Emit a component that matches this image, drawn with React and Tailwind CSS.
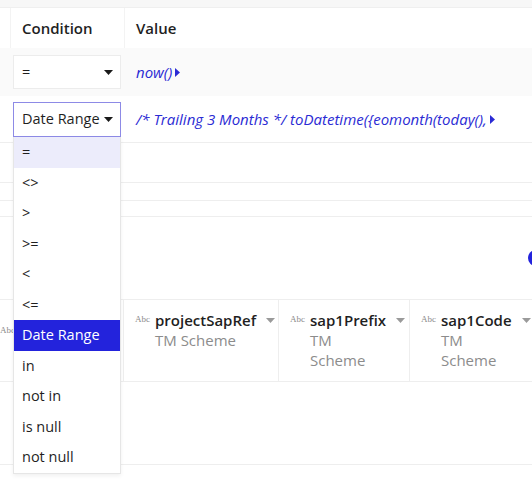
import React from "react";

const options = ["=", "<>", ">", ">=", "<", "<=", "Date Range", "in", "not in", "is null", "not null"];

const columns = [
  { name: "projectSapRef", width: "w-[155px]" },
  { name: "sap1Prefix", width: "w-[131px]" },
  { name: "sap1Code", width: "w-[140px]" },
];

function Caret({ className = "fill-[#1a1a1a]" }) {
  return (
    <svg width="9" height="5" viewBox="0 0 9 5" className={className}>
      <path d="M0 0 H9 L4.5 5 Z" />
    </svg>
  );
}

function PlayMark() {
  return (
    <svg width="5" height="9" viewBox="0 0 5 9" className="ml-[3px] fill-[#2b2bd4]">
      <path d="M0 0 L5 4.5 L0 9 Z" />
    </svg>
  );
}

function Select({ label, active }) {
  return (
    <div
      className={
        "flex items-center justify-between w-[108px] bg-white pl-[8px] pr-[7px] text-[14.5px] text-[#1f1f1f] " +
        (active ? "h-[35px] border border-[#8d8ae6]" : "h-[34px] border border-[#ececec]")
      }
    >
      <span className="whitespace-nowrap">{label}</span>
      <Caret />
    </div>
  );
}

function ColumnHeader({ name, width }) {
  return (
    <div className={"flex shrink-0 items-start border-r border-[#eeeeee] pl-[11px] pt-[10px] " + width}>
      <span className="mt-[5px] w-[20px] font-['Liberation_Serif'] text-[9px] leading-none text-[#8a8a8a]">Abc</span>
      <div className="inline-grid">
        <span className="whitespace-nowrap text-[15px] font-semibold leading-[20px] text-[#1f1f1f]">{name}</span>
        <span className="w-0 min-w-full text-[15px] leading-[20px] text-[#8c8c8c]">TM Scheme</span>
      </div>
      <Caret className="ml-[10px] mt-[8px] shrink-0 fill-[#9a9a9a]" />
    </div>
  );
}

export default function App() {
  return (
    <div className="relative h-[480px] w-[532px] overflow-hidden bg-white font-['Open_Sans',sans-serif]">
      <div className="h-[8px] border-b border-[#efefef] bg-[#f7f7f7]" />

      {/* header */}
      <div className="flex h-[40px] items-center">
        <div className="w-[10px]" />
        <div className="flex h-full w-[115px] items-center border-x border-[#f3f3f3] pl-[11px] text-[15px] font-semibold text-[#1f1f1f]">
          Condition
        </div>
        <div className="pl-[11px] text-[15px] font-semibold text-[#1f1f1f]">Value</div>
      </div>

      {/* row 1 */}
      <div className="flex h-[48px] items-center bg-[#fafafa] pl-[13px]">
        <Select label="=" />
        <div className="ml-[15px] flex items-center text-[15px] italic text-[#2b2bd4]">
          now()
          <PlayMark />
        </div>
      </div>

      {/* row 2 */}
      <div className="flex h-[47px] items-center border-b border-[#eeeeee] pl-[13px]">
        <Select label="Date Range" active />
        <div className="ml-[15px] flex items-center whitespace-nowrap text-[15px] italic text-[#2b2bd4]">
          /* Trailing 3 Months */ toDatetime({"{"}eomonth(today(),
          <PlayMark />
        </div>
      </div>

      <div className="h-[40px] border-b border-[#eeeeee]" />
      <div className="h-[18px] border-b border-[#eeeeee]" />
      <div className="h-[16px] border-b border-[#eeeeee]" />

      <div className="flex h-[82px] items-center justify-end">
        <div className="mr-[-12px] h-[16px] w-[16px] rounded-full bg-[#2323dc]" />
      </div>

      {/* lower column headers */}
      <div className="flex h-[83px] border-y border-[#eeeeee]">
        <div className="w-[124px] shrink-0 border-r border-[#eeeeee] pt-[15px]">
          <span className="font-['Liberation_Serif'] text-[9px] leading-none text-[#8a8a8a]">Abc</span>
        </div>
        {columns.map((c) => (
          <ColumnHeader key={c.name} name={c.name} width={c.width} />
        ))}
      </div>
      <div className="h-[83px] border-b border-[#eeeeee]" />

      {/* open dropdown */}
      <div className="absolute left-[13px] top-[137px] w-[108px] border border-t-0 border-[#e6e6e6] bg-white shadow-[0_2px_4px_rgba(0,0,0,0.06)]">
        {options.map((o, i) => (
          <div
            key={o}
            className={
              "flex h-[30.5px] items-center pl-[8px] text-[14.5px] " +
              (o === "Date Range"
                ? "bg-[#2323dc] text-white"
                : i === 0
                ? "bg-[#ececfb] text-[#1f1f1f]"
                : "text-[#1f1f1f]")
            }
          >
            {o}
          </div>
        ))}
      </div>
    </div>
  );
}
